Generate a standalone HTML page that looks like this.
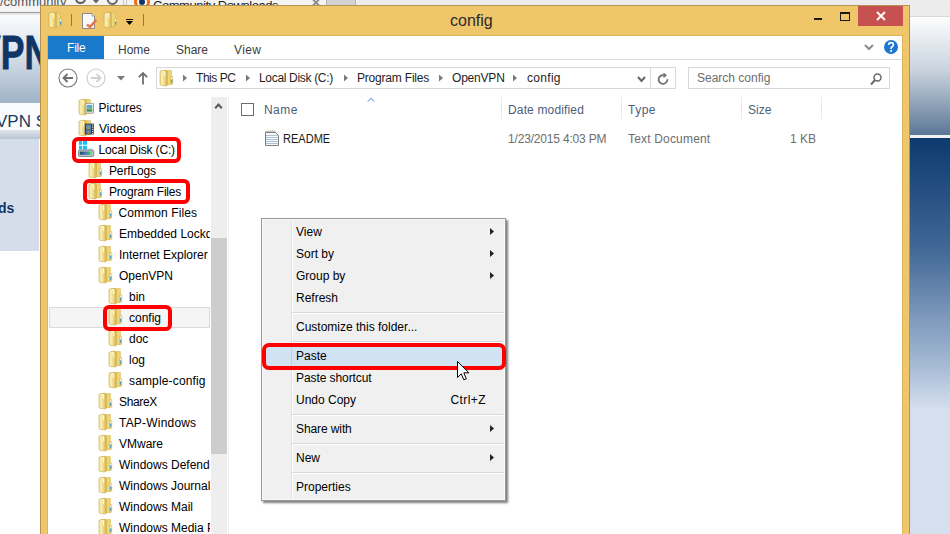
<!DOCTYPE html>
<html><head><meta charset="utf-8">
<style>
*{margin:0;padding:0;box-sizing:border-box}
html,body{width:950px;height:534px;overflow:hidden;background:#fff;font-family:"Liberation Sans",sans-serif;font-size:12px;color:#000}
.a{position:absolute}
.t{position:absolute;white-space:nowrap;line-height:16px}
svg{position:absolute;overflow:visible}
#tree .t{letter-spacing:0px}
</style></head><body>

<!-- ===== Browser background ===== -->
<div class="a" style="left:0;top:0;width:950px;height:12px;background:#f4f4f4"></div>
<div class="t" style="left:0px;top:-5.8px;font-size:13px;line-height:16px;color:#555">/community</div>
<div class="a" style="left:0;top:12px;width:950px;height:1px;background:#9a9a9a"></div>
<div class="a" style="left:0;top:13px;width:950px;height:2px;background:#e6e6e6"></div>
<!-- tab -->
<svg style="left:74px;top:-8px" width="14" height="14" viewBox="0 0 14 14"><circle cx="6.5" cy="6.5" r="4.6" fill="none" stroke="#5f5f5f" stroke-width="2"/></svg>
<svg style="left:91px;top:-2px" width="10" height="6" viewBox="0 0 10 6"><path d="M0 0H10L5 5.5Z" fill="#6a6a6a"/></svg>
<svg style="left:106px;top:-7px" width="13" height="13" viewBox="0 0 13 13"><path d="M11 6.5A4.6 4.6 0 1 1 8.5 2.3" fill="none" stroke="#6a6a6a" stroke-width="2"/></svg>
<div class="a" style="left:123px;top:0;width:1px;height:12px;background:#c4c4c4"></div>
<div class="a" style="left:126px;top:0;width:1px;height:12px;background:#c4c4c4"></div>
<div class="a" style="left:133.5px;top:-6px;width:16px;height:16px;border-radius:50%;background:#f26c1c"></div>
<div class="a" style="left:136.5px;top:-3px;width:10px;height:10px;border-radius:50%;background:#fff"></div>
<div class="a" style="left:138.5px;top:-1px;width:6px;height:6px;border-radius:50%;background:#12356a"></div>
<div class="t" style="left:153px;top:-2.3px;font-size:13px;line-height:16px;color:#222;letter-spacing:-0.45px">Community Downloads</div>
<svg style="left:311px;top:-0.5px" width="10" height="8" viewBox="0 0 10 8"><path d="M1.5 -1L8.5 6M8.5 -1L1.5 6" stroke="#8a8a8a" stroke-width="1.8"/></svg>
<div class="a" style="left:326px;top:0;width:30px;height:12px;background:#d2d2d2;border-left:1px solid #b5b5b5;border-right:1px solid #b5b5b5"></div>
<div class="a" style="left:356px;top:0;width:594px;height:12px;background:#ececec"></div>
<!-- left page -->
<div class="a" style="left:0;top:15px;width:40px;height:88px;background:linear-gradient(#fbfcfd,#dde4ec 40%,#9fb2c7)"></div>
<div class="t" style="left:-23.5px;top:27.8px;font-size:48px;line-height:50px;font-weight:bold;color:#0f3567;-webkit-text-stroke:0.8px #0f3567;transform:scaleX(0.74);transform-origin:0 0">VPN</div>
<div class="a" style="left:0;top:103px;width:40px;height:27px;background:#fafbfc"></div>
<div class="t" style="left:-4px;top:111.5px;font-size:17px;line-height:20px;color:#1c3b63">VPN S</div>
<div class="a" style="left:0;top:130px;width:40px;height:9px;background:linear-gradient(#dfe5ec,#b7c4d3)"></div>
<div class="a" style="left:0;top:139px;width:39px;height:112px;background:#d4dde9"></div>
<div class="t" style="left:-2px;top:200px;font-size:14px;font-weight:bold;color:#0f3567">ds</div>
<!-- right page -->
<div class="a" style="left:909px;top:12px;width:41px;height:4px;background:#ebebeb"></div>
<div class="a" style="left:909px;top:16px;width:41px;height:1px;background:#d9d9d9"></div>
<div class="a" style="left:909px;top:17px;width:41px;height:118px;background:linear-gradient(#fdfdfe,#c9d3de 45%,#5b7797)"></div>
<div class="a" style="left:909px;top:135px;width:41px;height:3px;background:#f0f2f5"></div>
<div class="a" style="left:909px;top:138px;width:41px;height:270px;background:linear-gradient(#0d3a6e,#3f6695 40%,#a8bcd6 85%,#d4deec)"></div>
<div class="a" style="left:909px;top:408px;width:41px;height:126px;background:#d5dfed"></div>

<!-- ===== Explorer window ===== -->
<div class="a" style="left:40px;top:5px;width:870px;height:540px;background:#f0c66b;border:1px solid #b39450"></div>
<!-- title bar icons -->
<svg style="left:49px;top:12px" width="14" height="16" viewBox="0 0 14 16"><path d="M2 0.6H11.4V14.6H2Z" fill="#eed57c" stroke="#d4b550" stroke-width="0.6"/> <path d="M10.6 6.6H12.8V14.2H10.6Z" fill="#e9cf70" stroke="#d4b550" stroke-width="0.4"/> <path d="M11.7 7.4V9.6" stroke="#ffffff" stroke-width="1.1"/> <path d="M11.7 9.6V12.8" stroke="#2f98dc" stroke-width="1.1"/> <path d="M0 1.2L5.8 0.2L7.4 1.2V15.2L6.2 16L1 15.3L0 14.6Z" fill="url(#fg)" stroke="#cfad48" stroke-width="0.6"/> <path d="M2.6 1.4L4.6 1.9V6" stroke="#fffdf0" stroke-width="1" fill="none"/></svg>
<div class="a" style="left:71px;top:14px;width:1px;height:12px;background:#8f7a48"></div>
<svg style="left:82px;top:13px" width="15" height="16" viewBox="0 0 15 16">
 <path d="M0.5 0.5H10L12.5 3V15.5H0.5Z" fill="#f8f8f8" stroke="#8a8a8a"/>
 <path d="M10 0.5V3H12.5" fill="#fff" stroke="#8a8a8a" stroke-width="0.8"/>
 <path d="M5 11.5L8 14L14.3 6.8" fill="none" stroke="#e8744a" stroke-width="2.4"/>
</svg>
<svg style="left:104px;top:12px" width="14" height="16" viewBox="0 0 14 16"><path d="M2 0.6H11.4V14.6H2Z" fill="#eed57c" stroke="#d4b550" stroke-width="0.6"/> <path d="M10.6 6.6H12.8V14.2H10.6Z" fill="#e9cf70" stroke="#d4b550" stroke-width="0.4"/> <path d="M11.7 7.4V9.6" stroke="#ffffff" stroke-width="1.1"/> <path d="M11.7 9.6V12.8" stroke="#2f98dc" stroke-width="1.1"/> <path d="M0 1.2L5.8 0.2L7.4 1.2V15.2L6.2 16L1 15.3L0 14.6Z" fill="url(#fg)" stroke="#cfad48" stroke-width="0.6"/> <path d="M2.6 1.4L4.6 1.9V6" stroke="#fffdf0" stroke-width="1" fill="none"/></svg>
<div class="a" style="left:126px;top:19px;width:7px;height:1px;background:#000"></div>
<svg style="left:126px;top:21px" width="7" height="4" viewBox="0 0 7 4"><path d="M0 0H7L3.5 4Z" fill="#000"/></svg>
<div class="a" style="left:143px;top:14px;width:1px;height:12px;background:#8f7a48"></div>
<div class="t" style="left:450px;top:12.3px;font-size:16px;line-height:18px;color:#2b2b2b">config</div>
<!-- caption buttons -->
<div class="a" style="left:814px;top:18px;width:8px;height:2px;background:#1a1a1a"></div>
<div class="a" style="left:840px;top:12px;width:10px;height:9px;border:1px solid #1a1a1a;border-top-width:2px"></div>
<div class="a" style="left:858px;top:6px;width:45px;height:20px;background:#c75050"></div>
<svg style="left:876px;top:11px" width="10" height="10" viewBox="0 0 10 10"><path d="M1 1L9 9M9 1L1 9" stroke="#fff" stroke-width="1.9"/></svg>

<!-- window client -->
<div class="a" style="left:47px;top:35px;width:856px;height:510px;background:#fff;border:1px solid #dcb65e"></div>
<!-- ribbon tabs -->
<div class="a" style="left:48px;top:36px;width:56px;height:23px;background:#1979ca"></div>
<div class="t" style="left:67px;top:40.4px;color:#fff;letter-spacing:-0.2px">File</div>
<div class="t" style="left:118px;top:42px;color:#3c3c3c">Home</div>
<div class="t" style="left:176px;top:42px;color:#3c3c3c">Share</div>
<div class="t" style="left:234px;top:42px;color:#3c3c3c;letter-spacing:0.4px">View</div>
<div class="a" style="left:48px;top:59px;width:854px;height:1px;background:#dadbdc"></div>
<svg style="left:864px;top:44px" width="10" height="7" viewBox="0 0 10 7"><path d="M1 1L5 5L9 1" fill="none" stroke="#8c8c8c" stroke-width="2"/></svg>
<svg style="left:884px;top:40px" width="14" height="14" viewBox="0 0 14 14"><circle cx="7" cy="7" r="7" fill="#1e76cf"/><path d="M4.6 4.9Q4.8 2.6 7 2.6Q9.4 2.6 9.4 4.7Q9.4 5.9 8.1 6.7Q7.1 7.3 7.1 8.6V9" fill="none" stroke="#fff" stroke-width="1.6"/><rect x="6.2" y="10" width="1.8" height="1.8" fill="#fff"/></svg>

<!-- navigation buttons -->
<svg style="left:58px;top:68px" width="20" height="20" viewBox="0 0 20 20">
 <circle cx="10" cy="10" r="9" fill="none" stroke="#777" stroke-width="1.1"/>
 <path d="M15 10H5.5M9.5 6L5.5 10L9.5 14" fill="none" stroke="#6f6f6f" stroke-width="1.8"/>
</svg>
<svg style="left:86px;top:68px" width="20" height="20" viewBox="0 0 20 20">
 <circle cx="10" cy="10" r="9" fill="none" stroke="#cfcfcf" stroke-width="1.2"/>
 <path d="M5 10H14.5M10.5 6L14.5 10L10.5 14" fill="none" stroke="#cfcfcf" stroke-width="1.8"/>
</svg>
<svg style="left:116.5px;top:75.5px" width="8" height="5" viewBox="0 0 8 5"><path d="M0 0H8L4 4.5Z" fill="#7a7a7a"/></svg>
<svg style="left:137px;top:71px" width="12" height="16" viewBox="0 0 12 16"><path d="M6 13.5V2M1.8 6.2L6 2L10.2 6.2" fill="none" stroke="#6f6f6f" stroke-width="1.8"/></svg>

<!-- address bar -->
<div class="a" style="left:156px;top:67px;width:520px;height:22px;border:1px solid #d9d9d9"></div>
<svg style="left:160px;top:70px" width="14" height="16" viewBox="0 0 14 16"><path d="M2 0.6H11.4V14.6H2Z" fill="#eed57c" stroke="#d4b550" stroke-width="0.6"/> <path d="M10.6 6.6H12.8V14.2H10.6Z" fill="#e9cf70" stroke="#d4b550" stroke-width="0.4"/> <path d="M11.7 7.4V9.6" stroke="#ffffff" stroke-width="1.1"/> <path d="M11.7 9.6V12.8" stroke="#2f98dc" stroke-width="1.1"/> <path d="M0 1.2L5.8 0.2L7.4 1.2V15.2L6.2 16L1 15.3L0 14.6Z" fill="url(#fg)" stroke="#cfad48" stroke-width="0.6"/> <path d="M2.6 1.4L4.6 1.9V6" stroke="#fffdf0" stroke-width="1" fill="none"/></svg>
<svg style="left:183px;top:74px" width="4" height="8" viewBox="0 0 4 8"><path d="M0 0.5L4 4L0 7.5Z" fill="#7a7a7a"/></svg>
<div class="t" style="left:196px;top:70.2px;color:#1e1e1e;letter-spacing:-0.45px">This PC</div>
<svg style="left:246px;top:74px" width="4" height="8" viewBox="0 0 4 8"><path d="M0 0.5L4 4L0 7.5Z" fill="#7a7a7a"/></svg>
<div class="t" style="left:259px;top:70.2px;color:#1e1e1e;letter-spacing:-0.32px">Local Disk (C:)</div>
<svg style="left:344px;top:74px" width="4" height="8" viewBox="0 0 4 8"><path d="M0 0.5L4 4L0 7.5Z" fill="#7a7a7a"/></svg>
<div class="t" style="left:357px;top:70.2px;color:#1e1e1e;letter-spacing:-0.2px">Program Files</div>
<svg style="left:439px;top:74px" width="4" height="8" viewBox="0 0 4 8"><path d="M0 0.5L4 4L0 7.5Z" fill="#7a7a7a"/></svg>
<div class="t" style="left:452px;top:70.2px;color:#1e1e1e;letter-spacing:-0.2px">OpenVPN</div>
<svg style="left:513px;top:74px" width="4" height="8" viewBox="0 0 4 8"><path d="M0 0.5L4 4L0 7.5Z" fill="#7a7a7a"/></svg>
<div class="t" style="left:527px;top:70.2px;color:#1e1e1e;letter-spacing:0.3px">config</div>
<svg style="left:637px;top:76px" width="9" height="7" viewBox="0 0 9 7"><path d="M1 1L4.5 5L8 1" fill="none" stroke="#666" stroke-width="2"/></svg>
<div class="a" style="left:650px;top:68px;width:1px;height:20px;background:#d9d9d9"></div>
<svg style="left:657px;top:72px" width="13" height="14" viewBox="0 0 13 14"><path d="M10.4 7.3A4.4 4.4 0 1 1 7.6 3.4" fill="none" stroke="#707070" stroke-width="1.8"/><path d="M6.5 0.4L10 3.3L6.5 6.2Z" fill="#707070"/></svg>
<!-- search -->
<div class="a" style="left:688px;top:67px;width:202px;height:22px;border:1px solid #d9d9d9"></div>
<div class="t" style="left:697px;top:70.2px;color:#6d6d6d">Search config</div>
<svg style="left:869.5px;top:72.5px" width="12" height="13" viewBox="0 0 12 13"><circle cx="7.5" cy="4.5" r="3.5" fill="none" stroke="#6a6a6a" stroke-width="1.5"/><path d="M5 7L1 11.5" stroke="#6a6a6a" stroke-width="2"/></svg>

<!-- ===== Navigation pane ===== -->
<div class="a" style="left:211px;top:97px;width:16px;height:437px;background:#eeeeee"></div>
<div class="a" style="left:211px;top:238px;width:16px;height:216px;background:#cdcdcd"></div>
<svg style="left:214px;top:103px" width="9" height="6" viewBox="0 0 9 6"><path d="M1.2 5.2L4.5 1.6L7.8 5.2" fill="none" stroke="#5a5a5a" stroke-width="2.1"/></svg>
<div class="a" style="left:228px;top:97px;width:1px;height:437px;background:#f0f0f0"></div>

<div class="a" style="left:49px;top:307px;width:161px;height:21px;background:#f5f5f5;border:1px solid #dadada"></div>

<div id="tree" class="a" style="left:0;top:0;width:210px;height:534px;overflow:hidden">
<svg style="left:79px;top:99px" width="15" height="16" viewBox="0 0 15 16"><path d="M2 0.6H11.4V14.6H2Z" fill="#eed57c" stroke="#d4b550" stroke-width="0.6"/> <path d="M10.6 6.6H12.8V14.2H10.6Z" fill="#e9cf70" stroke="#d4b550" stroke-width="0.4"/> <path d="M11.7 7.4V9.6" stroke="#ffffff" stroke-width="1.1"/> <path d="M11.7 9.6V12.8" stroke="#2f98dc" stroke-width="1.1"/> <path d="M0 1.2L5.8 0.2L7.4 1.2V15.2L6.2 16L1 15.3L0 14.6Z" fill="url(#fg)" stroke="#cfad48" stroke-width="0.6"/> <path d="M2.6 1.4L4.6 1.9V6" stroke="#fffdf0" stroke-width="1" fill="none"/><rect x="6.3" y="4.7" width="8.2" height="9.3" fill="#fff" stroke="#9a9a9a" stroke-width="0.9"/><rect x="7.5" y="6" width="5.8" height="3.5" fill="#5aa8d8"/><rect x="7.5" y="9.5" width="5.8" height="3.2" fill="#3f8a55"/><path d="M7.5 9.8L9.5 8.6L11 9.6L13.3 8.8V10.4H7.5Z" fill="#8cc07a"/></svg>
<div class="t" style="left:98.5px;top:100px">Pictures</div>
<svg style="left:79px;top:120px" width="15" height="16" viewBox="0 0 15 16"><path d="M2 0.6H11.4V14.6H2Z" fill="#eed57c" stroke="#d4b550" stroke-width="0.6"/> <path d="M10.6 6.6H12.8V14.2H10.6Z" fill="#e9cf70" stroke="#d4b550" stroke-width="0.4"/> <path d="M11.7 7.4V9.6" stroke="#ffffff" stroke-width="1.1"/> <path d="M11.7 9.6V12.8" stroke="#2f98dc" stroke-width="1.1"/> <path d="M0 1.2L5.8 0.2L7.4 1.2V15.2L6.2 16L1 15.3L0 14.6Z" fill="url(#fg)" stroke="#cfad48" stroke-width="0.6"/> <path d="M2.6 1.4L4.6 1.9V6" stroke="#fffdf0" stroke-width="1" fill="none"/><rect x="5.8" y="3.6" width="9" height="10.8" fill="#3a3f46"/><rect x="7" y="4.6" width="5" height="4.3" fill="#5b8fb6"/><rect x="7" y="9.4" width="5" height="4" fill="#4a83ac"/><path d="M8 8.9L9.5 7L11 8.9Z" fill="#e38a2c"/><path d="M8 13.4L9.5 11.5L11 13.4Z" fill="#e38a2c"/><path d="M13.5 4.6V5.6M13.5 6.8V7.8M13.5 9V10M13.5 11.2V12.2M13.5 13.2V14" stroke="#e8e8e8" stroke-width="1"/></svg>
<div class="t" style="left:99px;top:121px">Videos</div>
<svg style="left:77px;top:140px" width="18" height="17" viewBox="0 0 18 17">
 <defs><linearGradient id="dg" x1="0" x2="1" y1="0" y2="0"><stop offset="0" stop-color="#1d4a72"/><stop offset="1" stop-color="#5aa3b5"/></linearGradient></defs>
 <path d="M10.5 8.6H15L16 10H10.5Z" fill="#d6dadd"/>
 <rect x="1.9" y="1.1" width="3.3" height="3.7" fill="#1ac0f5"/><rect x="6" y="0.8" width="4" height="4" fill="#1ac0f5"/>
 <rect x="1.9" y="5.8" width="3.3" height="3.6" fill="#1ac0f5"/><rect x="6" y="5.8" width="4" height="3.8" fill="#1ac0f5"/>
 <rect x="1.4" y="10" width="15.4" height="6.6" rx="1.6" fill="#b9c1c7" stroke="#6c757d" stroke-width="0.8"/>
 <rect x="2.8" y="11.6" width="10.2" height="3.2" fill="url(#dg)"/>
 <rect x="13.2" y="11.4" width="1.3" height="3.6" fill="#3fe83f"/>
</svg>
<div class="t" style="left:98.5px;top:142px;letter-spacing:-0.15px">Local Disk (C:)</div>
<svg style="left:89px;top:162px" width="14" height="16" viewBox="0 0 14 16"><path d="M2 0.6H11.4V14.6H2Z" fill="#eed57c" stroke="#d4b550" stroke-width="0.6"/> <path d="M10.6 6.6H12.8V14.2H10.6Z" fill="#e9cf70" stroke="#d4b550" stroke-width="0.4"/> <path d="M11.7 7.4V9.6" stroke="#ffffff" stroke-width="1.1"/> <path d="M11.7 9.6V12.8" stroke="#2f98dc" stroke-width="1.1"/> <path d="M0 1.2L5.8 0.2L7.4 1.2V15.2L6.2 16L1 15.3L0 14.6Z" fill="url(#fg)" stroke="#cfad48" stroke-width="0.6"/> <path d="M2.6 1.4L4.6 1.9V6" stroke="#fffdf0" stroke-width="1" fill="none"/></svg>
<div class="t" style="left:109px;top:163px;letter-spacing:-0.15px">PerfLogs</div>
<svg style="left:89px;top:183px" width="14" height="16" viewBox="0 0 14 16"><path d="M2 0.6H11.4V14.6H2Z" fill="#eed57c" stroke="#d4b550" stroke-width="0.6"/> <path d="M10.6 6.6H12.8V14.2H10.6Z" fill="#e9cf70" stroke="#d4b550" stroke-width="0.4"/> <path d="M11.7 7.4V9.6" stroke="#ffffff" stroke-width="1.1"/> <path d="M11.7 9.6V12.8" stroke="#2f98dc" stroke-width="1.1"/> <path d="M0 1.2L5.8 0.2L7.4 1.2V15.2L6.2 16L1 15.3L0 14.6Z" fill="url(#fg)" stroke="#cfad48" stroke-width="0.6"/> <path d="M2.6 1.4L4.6 1.9V6" stroke="#fffdf0" stroke-width="1" fill="none"/></svg>
<div class="t" style="left:109px;top:184px;letter-spacing:-0.2px">Program Files</div>
<svg style="left:99px;top:204px" width="14" height="16" viewBox="0 0 14 16"><path d="M2 0.6H11.4V14.6H2Z" fill="#eed57c" stroke="#d4b550" stroke-width="0.6"/> <path d="M10.6 6.6H12.8V14.2H10.6Z" fill="#e9cf70" stroke="#d4b550" stroke-width="0.4"/> <path d="M11.7 7.4V9.6" stroke="#ffffff" stroke-width="1.1"/> <path d="M11.7 9.6V12.8" stroke="#2f98dc" stroke-width="1.1"/> <path d="M0 1.2L5.8 0.2L7.4 1.2V15.2L6.2 16L1 15.3L0 14.6Z" fill="url(#fg)" stroke="#cfad48" stroke-width="0.6"/> <path d="M2.6 1.4L4.6 1.9V6" stroke="#fffdf0" stroke-width="1" fill="none"/></svg>
<div class="t" style="left:118.5px;top:205px;letter-spacing:0.1px">Common Files</div>
<svg style="left:99px;top:225px" width="14" height="16" viewBox="0 0 14 16"><path d="M2 0.6H11.4V14.6H2Z" fill="#eed57c" stroke="#d4b550" stroke-width="0.6"/> <path d="M10.6 6.6H12.8V14.2H10.6Z" fill="#e9cf70" stroke="#d4b550" stroke-width="0.4"/> <path d="M11.7 7.4V9.6" stroke="#ffffff" stroke-width="1.1"/> <path d="M11.7 9.6V12.8" stroke="#2f98dc" stroke-width="1.1"/> <path d="M0 1.2L5.8 0.2L7.4 1.2V15.2L6.2 16L1 15.3L0 14.6Z" fill="url(#fg)" stroke="#cfad48" stroke-width="0.6"/> <path d="M2.6 1.4L4.6 1.9V6" stroke="#fffdf0" stroke-width="1" fill="none"/></svg>
<div class="t" style="left:119px;top:226px">Embedded Lockdown Manager</div>
<svg style="left:99px;top:246px" width="14" height="16" viewBox="0 0 14 16"><path d="M2 0.6H11.4V14.6H2Z" fill="#eed57c" stroke="#d4b550" stroke-width="0.6"/> <path d="M10.6 6.6H12.8V14.2H10.6Z" fill="#e9cf70" stroke="#d4b550" stroke-width="0.4"/> <path d="M11.7 7.4V9.6" stroke="#ffffff" stroke-width="1.1"/> <path d="M11.7 9.6V12.8" stroke="#2f98dc" stroke-width="1.1"/> <path d="M0 1.2L5.8 0.2L7.4 1.2V15.2L6.2 16L1 15.3L0 14.6Z" fill="url(#fg)" stroke="#cfad48" stroke-width="0.6"/> <path d="M2.6 1.4L4.6 1.9V6" stroke="#fffdf0" stroke-width="1" fill="none"/></svg>
<div class="t" style="left:119px;top:247px">Internet Explorer</div>
<svg style="left:99px;top:267px" width="14" height="16" viewBox="0 0 14 16"><path d="M2 0.6H11.4V14.6H2Z" fill="#eed57c" stroke="#d4b550" stroke-width="0.6"/> <path d="M10.6 6.6H12.8V14.2H10.6Z" fill="#e9cf70" stroke="#d4b550" stroke-width="0.4"/> <path d="M11.7 7.4V9.6" stroke="#ffffff" stroke-width="1.1"/> <path d="M11.7 9.6V12.8" stroke="#2f98dc" stroke-width="1.1"/> <path d="M0 1.2L5.8 0.2L7.4 1.2V15.2L6.2 16L1 15.3L0 14.6Z" fill="url(#fg)" stroke="#cfad48" stroke-width="0.6"/> <path d="M2.6 1.4L4.6 1.9V6" stroke="#fffdf0" stroke-width="1" fill="none"/></svg>
<div class="t" style="left:119px;top:268px">OpenVPN</div>
<svg style="left:109px;top:288px" width="14" height="16" viewBox="0 0 14 16"><path d="M2 0.6H11.4V14.6H2Z" fill="#eed57c" stroke="#d4b550" stroke-width="0.6"/> <path d="M10.6 6.6H12.8V14.2H10.6Z" fill="#e9cf70" stroke="#d4b550" stroke-width="0.4"/> <path d="M11.7 7.4V9.6" stroke="#ffffff" stroke-width="1.1"/> <path d="M11.7 9.6V12.8" stroke="#2f98dc" stroke-width="1.1"/> <path d="M0 1.2L5.8 0.2L7.4 1.2V15.2L6.2 16L1 15.3L0 14.6Z" fill="url(#fg)" stroke="#cfad48" stroke-width="0.6"/> <path d="M2.6 1.4L4.6 1.9V6" stroke="#fffdf0" stroke-width="1" fill="none"/></svg>
<div class="t" style="left:129px;top:289px">bin</div>
<svg style="left:109px;top:309px" width="14" height="16" viewBox="0 0 14 16"><path d="M2 0.6H11.4V14.6H2Z" fill="#eed57c" stroke="#d4b550" stroke-width="0.6"/> <path d="M10.6 6.6H12.8V14.2H10.6Z" fill="#e9cf70" stroke="#d4b550" stroke-width="0.4"/> <path d="M11.7 7.4V9.6" stroke="#ffffff" stroke-width="1.1"/> <path d="M11.7 9.6V12.8" stroke="#2f98dc" stroke-width="1.1"/> <path d="M0 1.2L5.8 0.2L7.4 1.2V15.2L6.2 16L1 15.3L0 14.6Z" fill="url(#fg)" stroke="#cfad48" stroke-width="0.6"/> <path d="M2.6 1.4L4.6 1.9V6" stroke="#fffdf0" stroke-width="1" fill="none"/></svg>
<div class="t" style="left:129px;top:310px">config</div>
<svg style="left:109px;top:330px" width="14" height="16" viewBox="0 0 14 16"><path d="M2 0.6H11.4V14.6H2Z" fill="#eed57c" stroke="#d4b550" stroke-width="0.6"/> <path d="M10.6 6.6H12.8V14.2H10.6Z" fill="#e9cf70" stroke="#d4b550" stroke-width="0.4"/> <path d="M11.7 7.4V9.6" stroke="#ffffff" stroke-width="1.1"/> <path d="M11.7 9.6V12.8" stroke="#2f98dc" stroke-width="1.1"/> <path d="M0 1.2L5.8 0.2L7.4 1.2V15.2L6.2 16L1 15.3L0 14.6Z" fill="url(#fg)" stroke="#cfad48" stroke-width="0.6"/> <path d="M2.6 1.4L4.6 1.9V6" stroke="#fffdf0" stroke-width="1" fill="none"/></svg>
<div class="t" style="left:129px;top:331px">doc</div>
<svg style="left:109px;top:351px" width="14" height="16" viewBox="0 0 14 16"><path d="M2 0.6H11.4V14.6H2Z" fill="#eed57c" stroke="#d4b550" stroke-width="0.6"/> <path d="M10.6 6.6H12.8V14.2H10.6Z" fill="#e9cf70" stroke="#d4b550" stroke-width="0.4"/> <path d="M11.7 7.4V9.6" stroke="#ffffff" stroke-width="1.1"/> <path d="M11.7 9.6V12.8" stroke="#2f98dc" stroke-width="1.1"/> <path d="M0 1.2L5.8 0.2L7.4 1.2V15.2L6.2 16L1 15.3L0 14.6Z" fill="url(#fg)" stroke="#cfad48" stroke-width="0.6"/> <path d="M2.6 1.4L4.6 1.9V6" stroke="#fffdf0" stroke-width="1" fill="none"/></svg>
<div class="t" style="left:129px;top:352px">log</div>
<svg style="left:109px;top:372px" width="14" height="16" viewBox="0 0 14 16"><path d="M2 0.6H11.4V14.6H2Z" fill="#eed57c" stroke="#d4b550" stroke-width="0.6"/> <path d="M10.6 6.6H12.8V14.2H10.6Z" fill="#e9cf70" stroke="#d4b550" stroke-width="0.4"/> <path d="M11.7 7.4V9.6" stroke="#ffffff" stroke-width="1.1"/> <path d="M11.7 9.6V12.8" stroke="#2f98dc" stroke-width="1.1"/> <path d="M0 1.2L5.8 0.2L7.4 1.2V15.2L6.2 16L1 15.3L0 14.6Z" fill="url(#fg)" stroke="#cfad48" stroke-width="0.6"/> <path d="M2.6 1.4L4.6 1.9V6" stroke="#fffdf0" stroke-width="1" fill="none"/></svg>
<div class="t" style="left:129px;top:373px;letter-spacing:0.15px">sample-config</div>
<svg style="left:99px;top:393px" width="14" height="16" viewBox="0 0 14 16"><path d="M2 0.6H11.4V14.6H2Z" fill="#eed57c" stroke="#d4b550" stroke-width="0.6"/> <path d="M10.6 6.6H12.8V14.2H10.6Z" fill="#e9cf70" stroke="#d4b550" stroke-width="0.4"/> <path d="M11.7 7.4V9.6" stroke="#ffffff" stroke-width="1.1"/> <path d="M11.7 9.6V12.8" stroke="#2f98dc" stroke-width="1.1"/> <path d="M0 1.2L5.8 0.2L7.4 1.2V15.2L6.2 16L1 15.3L0 14.6Z" fill="url(#fg)" stroke="#cfad48" stroke-width="0.6"/> <path d="M2.6 1.4L4.6 1.9V6" stroke="#fffdf0" stroke-width="1" fill="none"/></svg>
<div class="t" style="left:119px;top:394px;letter-spacing:-0.35px">ShareX</div>
<svg style="left:99px;top:414px" width="14" height="16" viewBox="0 0 14 16"><path d="M2 0.6H11.4V14.6H2Z" fill="#eed57c" stroke="#d4b550" stroke-width="0.6"/> <path d="M10.6 6.6H12.8V14.2H10.6Z" fill="#e9cf70" stroke="#d4b550" stroke-width="0.4"/> <path d="M11.7 7.4V9.6" stroke="#ffffff" stroke-width="1.1"/> <path d="M11.7 9.6V12.8" stroke="#2f98dc" stroke-width="1.1"/> <path d="M0 1.2L5.8 0.2L7.4 1.2V15.2L6.2 16L1 15.3L0 14.6Z" fill="url(#fg)" stroke="#cfad48" stroke-width="0.6"/> <path d="M2.6 1.4L4.6 1.9V6" stroke="#fffdf0" stroke-width="1" fill="none"/></svg>
<div class="t" style="left:119px;top:415px;letter-spacing:0.2px">TAP-Windows</div>
<svg style="left:99px;top:435px" width="14" height="16" viewBox="0 0 14 16"><path d="M2 0.6H11.4V14.6H2Z" fill="#eed57c" stroke="#d4b550" stroke-width="0.6"/> <path d="M10.6 6.6H12.8V14.2H10.6Z" fill="#e9cf70" stroke="#d4b550" stroke-width="0.4"/> <path d="M11.7 7.4V9.6" stroke="#ffffff" stroke-width="1.1"/> <path d="M11.7 9.6V12.8" stroke="#2f98dc" stroke-width="1.1"/> <path d="M0 1.2L5.8 0.2L7.4 1.2V15.2L6.2 16L1 15.3L0 14.6Z" fill="url(#fg)" stroke="#cfad48" stroke-width="0.6"/> <path d="M2.6 1.4L4.6 1.9V6" stroke="#fffdf0" stroke-width="1" fill="none"/></svg>
<div class="t" style="left:119px;top:436px">VMware</div>
<svg style="left:99px;top:456px" width="14" height="16" viewBox="0 0 14 16"><path d="M2 0.6H11.4V14.6H2Z" fill="#eed57c" stroke="#d4b550" stroke-width="0.6"/> <path d="M10.6 6.6H12.8V14.2H10.6Z" fill="#e9cf70" stroke="#d4b550" stroke-width="0.4"/> <path d="M11.7 7.4V9.6" stroke="#ffffff" stroke-width="1.1"/> <path d="M11.7 9.6V12.8" stroke="#2f98dc" stroke-width="1.1"/> <path d="M0 1.2L5.8 0.2L7.4 1.2V15.2L6.2 16L1 15.3L0 14.6Z" fill="url(#fg)" stroke="#cfad48" stroke-width="0.6"/> <path d="M2.6 1.4L4.6 1.9V6" stroke="#fffdf0" stroke-width="1" fill="none"/></svg>
<div class="t" style="left:119px;top:457px">Windows Defender</div>
<svg style="left:99px;top:477px" width="14" height="16" viewBox="0 0 14 16"><path d="M2 0.6H11.4V14.6H2Z" fill="#eed57c" stroke="#d4b550" stroke-width="0.6"/> <path d="M10.6 6.6H12.8V14.2H10.6Z" fill="#e9cf70" stroke="#d4b550" stroke-width="0.4"/> <path d="M11.7 7.4V9.6" stroke="#ffffff" stroke-width="1.1"/> <path d="M11.7 9.6V12.8" stroke="#2f98dc" stroke-width="1.1"/> <path d="M0 1.2L5.8 0.2L7.4 1.2V15.2L6.2 16L1 15.3L0 14.6Z" fill="url(#fg)" stroke="#cfad48" stroke-width="0.6"/> <path d="M2.6 1.4L4.6 1.9V6" stroke="#fffdf0" stroke-width="1" fill="none"/></svg>
<div class="t" style="left:119px;top:478px">Windows Journal</div>
<svg style="left:99px;top:498px" width="14" height="16" viewBox="0 0 14 16"><path d="M2 0.6H11.4V14.6H2Z" fill="#eed57c" stroke="#d4b550" stroke-width="0.6"/> <path d="M10.6 6.6H12.8V14.2H10.6Z" fill="#e9cf70" stroke="#d4b550" stroke-width="0.4"/> <path d="M11.7 7.4V9.6" stroke="#ffffff" stroke-width="1.1"/> <path d="M11.7 9.6V12.8" stroke="#2f98dc" stroke-width="1.1"/> <path d="M0 1.2L5.8 0.2L7.4 1.2V15.2L6.2 16L1 15.3L0 14.6Z" fill="url(#fg)" stroke="#cfad48" stroke-width="0.6"/> <path d="M2.6 1.4L4.6 1.9V6" stroke="#fffdf0" stroke-width="1" fill="none"/></svg>
<div class="t" style="left:119px;top:499px">Windows Mail</div>
<svg style="left:99px;top:519px" width="14" height="16" viewBox="0 0 14 16"><path d="M2 0.6H11.4V14.6H2Z" fill="#eed57c" stroke="#d4b550" stroke-width="0.6"/> <path d="M10.6 6.6H12.8V14.2H10.6Z" fill="#e9cf70" stroke="#d4b550" stroke-width="0.4"/> <path d="M11.7 7.4V9.6" stroke="#ffffff" stroke-width="1.1"/> <path d="M11.7 9.6V12.8" stroke="#2f98dc" stroke-width="1.1"/> <path d="M0 1.2L5.8 0.2L7.4 1.2V15.2L6.2 16L1 15.3L0 14.6Z" fill="url(#fg)" stroke="#cfad48" stroke-width="0.6"/> <path d="M2.6 1.4L4.6 1.9V6" stroke="#fffdf0" stroke-width="1" fill="none"/></svg>
<div class="t" style="left:119px;top:520px">Windows Media Player</div>
</div>

<!-- red highlight boxes in tree -->
<div class="a" style="left:72px;top:137px;width:109px;height:26px;border:4px solid #f00;border-radius:6px"></div>
<div class="a" style="left:83px;top:179px;width:107px;height:25px;border:4px solid #f00;border-radius:6px"></div>
<div class="a" style="left:103px;top:305px;width:69px;height:26px;border:4px solid #f00;border-radius:6px"></div>

<!-- ===== Content pane ===== -->
<div class="a" style="left:241px;top:103px;width:13px;height:13px;border:1px solid #6e6e6e"></div>
<div class="t" style="left:264px;top:102.3px;color:#4c607a;letter-spacing:0.45px">Name</div>
<svg style="left:367px;top:97px" width="8" height="5" viewBox="0 0 8 5"><path d="M0 4.5L4 0.5L8 4.5L6.5 4.5L4 2.2L1.5 4.5Z" fill="#86aee0"/></svg>
<div class="a" style="left:501px;top:97px;width:1px;height:22px;background:#e3e9f1"></div>
<div class="t" style="left:508px;top:102.3px;color:#4c607a;letter-spacing:0.15px">Date modified</div>
<div class="a" style="left:621px;top:97px;width:1px;height:22px;background:#e3e9f1"></div>
<div class="t" style="left:628px;top:102.3px;color:#4c607a;letter-spacing:0.5px">Type</div>
<div class="a" style="left:741px;top:97px;width:1px;height:22px;background:#e3e9f1"></div>
<div class="t" style="left:748px;top:102.3px;color:#4c607a">Size</div>
<div class="a" style="left:821px;top:97px;width:1px;height:22px;background:#e3e9f1"></div>

<svg style="left:265px;top:130px" width="14" height="16" viewBox="0 0 14 16">
 <path d="M0.5 2.5H10.5L13.5 5.5V15.5H0.5Z" fill="#fafafa" stroke="#7d7d7d" stroke-width="1"/>
 <path d="M0.5 2Q1.5 0.2 2.5 1.6Q3.5 0.2 4.5 1.6Q5.5 0.2 6.5 1.6Q7.5 0.2 8.5 1.6Q9.5 0.2 10.5 2" fill="#fafafa" stroke="#8d8d8d" stroke-width="0.8"/>
 <path d="M1 5.5H12.7M1 7.5H12.7M1 9.5H12.7M1 11.5H12.7M1 13.5H12.7" stroke="#a9bfd6" stroke-width="1"/>
</svg>
<div class="t" style="left:283px;top:131.3px;color:#1a1a1a;transform:scaleX(0.92);transform-origin:0 0">README</div>
<div class="t" style="left:508px;top:131.3px;color:#6d6d6d;letter-spacing:-0.18px">1/23/2015 4:03 PM</div>
<div class="t" style="left:628px;top:131.3px;color:#6d6d6d;letter-spacing:0.18px">Text Document</div>
<div class="t" style="left:790px;top:131.3px;color:#6d6d6d">1 KB</div>

<!-- ===== Context menu ===== -->
<div class="a" style="left:261px;top:218px;width:245px;height:283px;background:#f0f0f0;border:1px solid #979797;box-shadow:inset 0 0 0 1px #fafafa,2px 2px 2px rgba(0,0,0,0.5)"></div>
<div class="a" style="left:291px;top:221px;width:1px;height:277px;background:#e0e0e0"></div>
<div class="a" style="left:292px;top:221px;width:1px;height:277px;background:#ffffff"></div>

<div class="t" style="left:296px;top:224px">View</div>
<svg style="left:490px;top:228px" width="4" height="7" viewBox="0 0 4 7"><path d="M0 0L4 3.5L0 7Z" fill="#222"/></svg>
<div class="t" style="left:296px;top:246px">Sort by</div>
<svg style="left:490px;top:250px" width="4" height="7" viewBox="0 0 4 7"><path d="M0 0L4 3.5L0 7Z" fill="#222"/></svg>
<div class="t" style="left:296px;top:268px">Group by</div>
<svg style="left:490px;top:272px" width="4" height="7" viewBox="0 0 4 7"><path d="M0 0L4 3.5L0 7Z" fill="#222"/></svg>
<div class="t" style="left:296px;top:290px">Refresh</div>
<div class="a" style="left:292px;top:312px;width:211px;height:1px;background:#d7d7d7"></div>
<div class="a" style="left:292px;top:313px;width:211px;height:1px;background:#fff"></div>
<div class="t" style="left:296px;top:319px">Customize this folder...</div>
<div class="a" style="left:292px;top:341px;width:211px;height:1px;background:#d7d7d7"></div>
<div class="a" style="left:292px;top:342px;width:211px;height:1px;background:#fff"></div>

<div class="a" style="left:264px;top:346px;width:240px;height:21px;background:#d1e2f2"></div>
<div class="a" style="left:291px;top:346px;width:1px;height:21px;background:#c3cfdb"></div>
<div class="t" style="left:296px;top:348px">Paste</div>
<div class="t" style="left:296px;top:370px;letter-spacing:-0.08px">Paste shortcut</div>
<div class="t" style="left:296px;top:392px">Undo Copy</div>
<div class="t" style="left:450.5px;top:392px;letter-spacing:0.4px">Ctrl+Z</div>
<div class="a" style="left:292px;top:414px;width:211px;height:1px;background:#d7d7d7"></div>
<div class="a" style="left:292px;top:415px;width:211px;height:1px;background:#fff"></div>
<div class="t" style="left:296px;top:421px;letter-spacing:-0.1px">Share with</div>
<svg style="left:490px;top:425px" width="4" height="7" viewBox="0 0 4 7"><path d="M0 0L4 3.5L0 7Z" fill="#222"/></svg>
<div class="a" style="left:292px;top:443px;width:211px;height:1px;background:#d7d7d7"></div>
<div class="a" style="left:292px;top:444px;width:211px;height:1px;background:#fff"></div>
<div class="t" style="left:296px;top:450px">New</div>
<svg style="left:490px;top:454px" width="4" height="7" viewBox="0 0 4 7"><path d="M0 0L4 3.5L0 7Z" fill="#222"/></svg>
<div class="a" style="left:292px;top:472px;width:211px;height:1px;background:#d7d7d7"></div>
<div class="a" style="left:292px;top:473px;width:211px;height:1px;background:#fff"></div>
<div class="t" style="left:296px;top:479px">Properties</div>

<div class="a" style="left:262px;top:343px;width:244px;height:27px;border:4px solid #f00;border-radius:7px"></div>

<!-- cursor -->
<svg style="left:457px;top:360.5px" width="13" height="21" viewBox="0 0 13 21">
 <path d="M0.5 0.5V16.5L4.3 12.8L6.8 18.8L9.3 17.8L6.8 11.8H12Z" fill="#fff" stroke="#000" stroke-width="1" stroke-linejoin="miter"/>
</svg>

<!-- defs -->
<svg width="0" height="0" style="left:0;top:0">
 <defs>
  <linearGradient id="fg" x1="0" x2="1" y1="0" y2="0"><stop offset="0" stop-color="#f1dc88"/><stop offset="0.28" stop-color="#faf0bc"/><stop offset="0.6" stop-color="#eed785"/><stop offset="1" stop-color="#d2b04a"/></linearGradient>
  
 </defs>
</svg>
</body></html>
